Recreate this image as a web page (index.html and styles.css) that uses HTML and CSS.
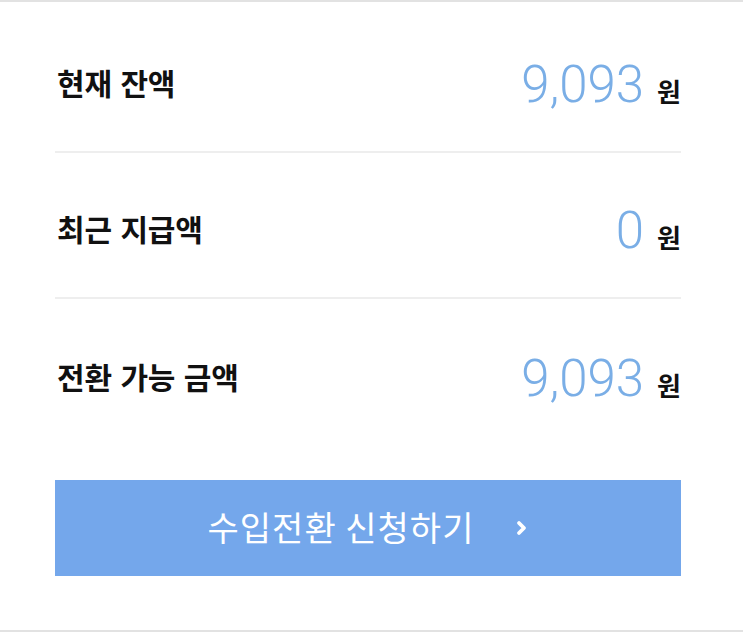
FILE: index.html
```html
<!DOCTYPE html>
<html>
<head>
    <title>수입전환</title>
    <link rel="stylesheet" href="styles.css">
</head>
<body>
    <div class="page">
        <div class="row first">
            <span class="label">현재 잔액</span>
            <span class="amount"><span class="num">9,093</span><span class="unit">원</span></span>
        </div>
        <div class="row second">
            <span class="label">최근 지급액</span>
            <span class="amount"><span class="num">0</span><span class="unit">원</span></span>
        </div>
        <div class="row last">
            <span class="label">전환 가능 금액</span>
            <span class="amount"><span class="num">9,093</span><span class="unit">원</span></span>
        </div>

        <button class="apply-btn">
            <span>수입전환 신청하기</span>
            <svg class="chevron" width="12" height="18" viewBox="0 0 12 18">
                <polyline points="3,4 8,9 3,14" fill="none" stroke="#fff" stroke-width="3.8" stroke-linecap="round" stroke-linejoin="round"/>
            </svg>
        </button>
    </div>
</body>
</html>
```

FILE: styles.css
```css
body {
    margin: 0;
    padding: 0;
    background-color: #fff;
    font-family: "Noto Sans CJK KR", "Noto Sans", sans-serif;
}

.page {
    height: 628px;
    border-top: 2px solid #e2e2e2;
    border-bottom: 2px solid #e2e2e2;
    padding: 0 62px 0 55px;
}

.row {
    height: 138px;
    padding-top: 8px;
    display: flex;
    align-items: center;
    justify-content: space-between;
    border-bottom: 2px solid #eeeeee;
}

.row.first {
    padding-top: 11px;
}

.row.second {
    padding-top: 6px;
}

.row.last {
    border-bottom: none;
}

.label {
    font-size: 30px;
    font-weight: 700;
    color: #111;
    letter-spacing: -0.2px;
    word-spacing: 2px;
    margin-left: 2px;
}

.amount {
    display: flex;
    align-items: baseline;
    margin-top: 4px;
}

.num {
    font-family: Roboto, "Liberation Sans", sans-serif;
    font-weight: 300;
    font-size: 51px;
    color: #7aaee6;
}

.unit {
    font-size: 26px;
    font-weight: 700;
    color: #111;
    margin-left: 13px;
}

.apply-btn {
    display: flex;
    align-items: center;
    justify-content: center;
    gap: 42px;
    width: 100%;
    height: 96px;
    margin-top: 35px;
    border: none;
    background-color: #74a7eb;
    color: #fff;
    font-family: "Noto Sans CJK KR", sans-serif;
    font-size: 34px;
    font-weight: 400;
    letter-spacing: 1px;
    padding: 0 0 4px 0;
}

.chevron {
    margin-top: 4px;
}
```
